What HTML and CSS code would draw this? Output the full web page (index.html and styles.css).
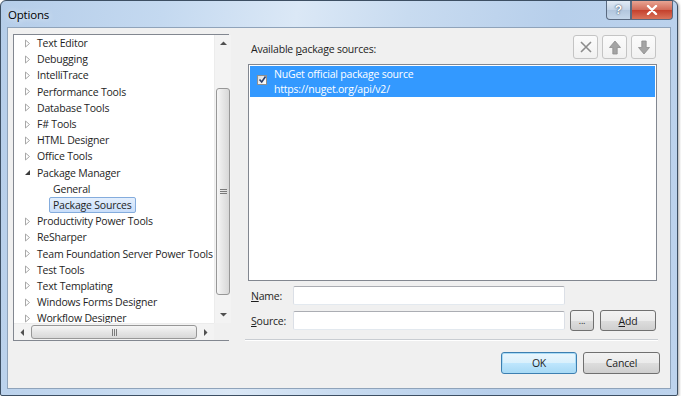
FILE: index.html
```html
<!DOCTYPE html>
<html lang="en">
<head>
    <meta charset="UTF-8">
    <title>Options</title>
    <link rel="stylesheet" href="styles.css">
</head>
<body>
<div class="window">
    <div class="titlebar">
        <span class="title">Options</span>
        <div class="caption-btns">
            <button class="cap-help">?</button>
            <button class="cap-close">
                <svg width="12" height="10" viewBox="0 0 12 10"><path d="M2 1 L10 9 M10 1 L2 9" stroke="#fff" stroke-width="2.4" stroke-linecap="round"/></svg>
            </button>
        </div>
    </div>

    <div class="client">
        <div class="main">
            <div class="tree">
                <div class="tree-items">
                    <div class="node"><span class="arrow"><svg width="9" height="9"><path d="M2.5 1 L6.5 4.5 L2.5 8 Z" fill="none" stroke="#a8a8a8"/></svg></span><span class="label">Text Editor</span></div>
                    <div class="node"><span class="arrow"><svg width="9" height="9"><path d="M2.5 1 L6.5 4.5 L2.5 8 Z" fill="none" stroke="#a8a8a8"/></svg></span><span class="label">Debugging</span></div>
                    <div class="node"><span class="arrow"><svg width="9" height="9"><path d="M2.5 1 L6.5 4.5 L2.5 8 Z" fill="none" stroke="#a8a8a8"/></svg></span><span class="label">IntelliTrace</span></div>
                    <div class="node"><span class="arrow"><svg width="9" height="9"><path d="M2.5 1 L6.5 4.5 L2.5 8 Z" fill="none" stroke="#a8a8a8"/></svg></span><span class="label">Performance Tools</span></div>
                    <div class="node"><span class="arrow"><svg width="9" height="9"><path d="M2.5 1 L6.5 4.5 L2.5 8 Z" fill="none" stroke="#a8a8a8"/></svg></span><span class="label">Database Tools</span></div>
                    <div class="node"><span class="arrow"><svg width="9" height="9"><path d="M2.5 1 L6.5 4.5 L2.5 8 Z" fill="none" stroke="#a8a8a8"/></svg></span><span class="label">F# Tools</span></div>
                    <div class="node"><span class="arrow"><svg width="9" height="9"><path d="M2.5 1 L6.5 4.5 L2.5 8 Z" fill="none" stroke="#a8a8a8"/></svg></span><span class="label">HTML Designer</span></div>
                    <div class="node"><span class="arrow"><svg width="9" height="9"><path d="M2.5 1 L6.5 4.5 L2.5 8 Z" fill="none" stroke="#a8a8a8"/></svg></span><span class="label">Office Tools</span></div>
                    <div class="node"><span class="arrow"><svg width="9" height="9"><path d="M7 2 L7 7 L2 7 Z" fill="#3c3c3c"/></svg></span><span class="label">Package Manager</span></div>
                    <div class="node child"><span class="label">General</span></div>
                    <div class="node child"><span class="label selected">Package Sources</span></div>
                    <div class="node"><span class="arrow"><svg width="9" height="9"><path d="M2.5 1 L6.5 4.5 L2.5 8 Z" fill="none" stroke="#a8a8a8"/></svg></span><span class="label">Productivity Power Tools</span></div>
                    <div class="node"><span class="arrow"><svg width="9" height="9"><path d="M2.5 1 L6.5 4.5 L2.5 8 Z" fill="none" stroke="#a8a8a8"/></svg></span><span class="label">ReSharper</span></div>
                    <div class="node"><span class="arrow"><svg width="9" height="9"><path d="M2.5 1 L6.5 4.5 L2.5 8 Z" fill="none" stroke="#a8a8a8"/></svg></span><span class="label">Team Foundation Server Power Tools</span></div>
                    <div class="node"><span class="arrow"><svg width="9" height="9"><path d="M2.5 1 L6.5 4.5 L2.5 8 Z" fill="none" stroke="#a8a8a8"/></svg></span><span class="label">Test Tools</span></div>
                    <div class="node"><span class="arrow"><svg width="9" height="9"><path d="M2.5 1 L6.5 4.5 L2.5 8 Z" fill="none" stroke="#a8a8a8"/></svg></span><span class="label">Text Templating</span></div>
                    <div class="node"><span class="arrow"><svg width="9" height="9"><path d="M2.5 1 L6.5 4.5 L2.5 8 Z" fill="none" stroke="#a8a8a8"/></svg></span><span class="label">Windows Forms Designer</span></div>
                    <div class="node"><span class="arrow"><svg width="9" height="9"><path d="M2.5 1 L6.5 4.5 L2.5 8 Z" fill="none" stroke="#a8a8a8"/></svg></span><span class="label">Workflow Designer</span></div>
                </div>
                <div class="vscroll">
                    <div class="sb-arrow"><svg width="7" height="5"><path d="M0 4 L3.5 0.5 L7 4 Z" fill="#505050"/></svg></div>
                    <div class="sb-track">
                        <div class="vthumb"><svg width="7" height="7"><path d="M0 1.5 H7 M0 3.5 H7 M0 5.5 H7" stroke="#7a7a7a"/></svg></div>
                    </div>
                    <div class="sb-arrow"><svg width="7" height="5"><path d="M0 1 L3.5 4.5 L7 1 Z" fill="#505050"/></svg></div>
                </div>
                <div class="hscroll">
                    <div class="sb-arrow"><svg width="5" height="7"><path d="M4 0 L0.5 3.5 L4 7 Z" fill="#505050"/></svg></div>
                    <div class="sb-track">
                        <div class="hthumb"><svg width="7" height="7"><path d="M1.5 0 V7 M3.5 0 V7 M5.5 0 V7" stroke="#7a7a7a"/></svg></div>
                    </div>
                    <div class="sb-arrow"><svg width="5" height="7"><path d="M1 0 L4.5 3.5 L1 7 Z" fill="#505050"/></svg></div>
                </div>
                <div class="sb-corner"></div>
            </div>

            <div class="pane">
                <div class="pane-head">
                    <span class="pane-label">Available <u>p</u>ackage sources:</span>
                    <div class="tool-btns">
                        <button class="tool-btn"><svg width="14" height="14"><path d="M2 2 L12 12 M12 2 L2 12" stroke="#8c8c8c" stroke-width="1.6"/></svg></button>
                        <button class="tool-btn"><svg width="12" height="15"><path d="M6 1 L11.5 7.5 L8.2 7.5 L8.2 14 L3.8 14 L3.8 7.5 L0.5 7.5 Z" fill="#a4a4a4" stroke="#8e8e8e" stroke-width="0.8"/></svg></button>
                        <button class="tool-btn"><svg width="12" height="15"><path d="M6 14 L11.5 7.5 L8.2 7.5 L8.2 1 L3.8 1 L3.8 7.5 L0.5 7.5 Z" fill="#a4a4a4" stroke="#8e8e8e" stroke-width="0.8"/></svg></button>
                    </div>
                </div>

                <div class="sources">
                    <div class="source-row">
                        <span class="check"><svg width="9" height="9"><path d="M1.5 4.5 L3.7 7 L7.5 1.5" fill="none" stroke="#2b3f6b" stroke-width="1.6"/></svg></span>
                        <div class="source-text">
                            <div>NuGet official package source</div>
                            <div>https://nuget.org/api/v2/</div>
                        </div>
                    </div>
                </div>

                <div class="field">
                    <label class="field-label"><u>N</u>ame:</label>
                    <input class="field-input" type="text">
                </div>
                <div class="field">
                    <label class="field-label"><u>S</u>ource:</label>
                    <input class="field-input" type="text">
                    <button class="btn btn-browse">...</button>
                    <button class="btn btn-add"><u>A</u>dd</button>
                </div>
                <div class="separator"></div>
            </div>
        </div>

        <div class="actions">
            <button class="btn btn-ok">OK</button>
            <button class="btn btn-cancel">Cancel</button>
        </div>
    </div>
</div>
</body>
</html>
```

FILE: styles.css
```css
body {
    margin: 0;
    padding: 0;
    background-color: #ffffff;
    font-family: "Open Sans", "Noto Sans", sans-serif;
    font-size: 10.5px;
    letter-spacing: -0.2px;
    color: #1e1e1e;
}

.window {
    width: 678px;
    height: 396px;
    box-sizing: border-box;
    border: 1px solid #3d4f63;
    border-radius: 6px 6px 2px 2px;
    padding: 0 6px 6px;
    background: linear-gradient(100deg, #b5cde9 0%, #c4d9f0 22%, #dbe8f6 40%, #c8dbf0 55%, #b7cfeb 75%, #bdd3ed 100%);
    box-shadow: 1px 1px 3px rgba(0, 0, 0, 0.35);
}

.titlebar {
    height: 26px;
    display: flex;
    justify-content: space-between;
    align-items: flex-start;
}

.title {
    padding: 6px 0 0 1px;
    font-size: 11.5px;
    color: #000000;
    text-shadow: 0 0 6px #ffffff;
}

.caption-btns {
    display: flex;
    margin-right: -2px;
}

.caption-btns button {
    height: 19px;
    border: 1px solid #5a6a80;
    border-top: none;
    padding: 0;
    display: flex;
    align-items: center;
    justify-content: center;
}

.cap-help {
    width: 25px;
    border-radius: 0 0 0 4px;
    background: linear-gradient(#e2ebf5, #c3d3e6 50%, #b2c6dd 51%, #c5d7ea);
    color: #ffffff;
    font-weight: bold;
    font-size: 12px;
    text-shadow: 0 0 2px #4b5c73, 0 0 1px #4b5c73;
}

.cap-close {
    width: 42px;
    border-radius: 0 0 4px 0;
    border-left: none;
    background: linear-gradient(#e8a493, #d26a57 50%, #c4402c 51%, #d9745b);
}

.client {
    height: 362px;
    box-sizing: border-box;
    border: 1px solid #8fa3ba;
    background-color: #f0f0f0;
    padding: 6px 0 0 5px;
}

.main {
    display: flex;
    height: 307px;
}

/* tree view */
.tree {
    width: 216px;
    box-sizing: border-box;
    border: 1px solid #828790;
    background-color: #ffffff;
    display: grid;
    grid-template-columns: 1fr 17px;
    grid-template-rows: 1fr 17px;
}

.tree-items {
    overflow: hidden;
    white-space: nowrap;
}

.node {
    height: 16.2px;
    display: flex;
    align-items: center;
    padding-left: 5px;
}

.node.child {
    padding-left: 35px;
}

.arrow {
    width: 14px;
    flex-shrink: 0;
    display: flex;
    align-items: center;
    padding-left: 4px;
    box-sizing: border-box;
}

.label {
    flex-shrink: 0;
    display: inline-block;
    line-height: 14px;
    border: 1px solid transparent;
    border-radius: 2px;
    padding: 0 3px;
}

.label.selected {
    background: linear-gradient(#e4effd, #c9defa);
    border-color: #84acdd;
}

.vscroll,
.hscroll {
    background: #f3f3f3;
    display: flex;
}

.vscroll {
    flex-direction: column;
    border-left: 1px solid #ececec;
}

.hscroll {
    border-top: 1px solid #ececec;
}

.sb-arrow {
    width: 17px;
    height: 17px;
    flex-shrink: 0;
    display: flex;
    align-items: center;
    justify-content: center;
}

.sb-track {
    flex: 1;
    display: flex;
}

.vscroll .sb-track {
    flex-direction: column;
}

.vthumb {
    margin: 36px 1px 0 1px;
    height: 205px;
    border: 1px solid #979797;
    border-radius: 3px;
    background: linear-gradient(90deg, #f6f6f6, #e6e6e6 50%, #d8d8d8);
    display: flex;
    align-items: center;
    justify-content: center;
}

.hthumb {
    margin: 1px 0;
    width: 164px;
    border: 1px solid #979797;
    border-radius: 3px;
    background: linear-gradient(#f6f6f6, #e6e6e6 50%, #d8d8d8);
    display: flex;
    align-items: center;
    justify-content: center;
}

.sb-corner {
    background: #f0f0f0;
}

/* right pane */
.pane {
    width: 413px;
    margin-left: 16px;
    display: flex;
    flex-direction: column;
}

.pane-head {
    display: flex;
    justify-content: space-between;
    align-items: center;
    height: 25px;
    margin-top: 1px;
    padding: 0 2px 0 6px;
}

.pane-label {
    padding-top: 4px;
}

.tool-btns {
    display: flex;
    gap: 4px;
}

.tool-btn {
    width: 25px;
    height: 24px;
    padding: 0;
    border: 1px solid #c4c4c4;
    border-radius: 3px;
    background: linear-gradient(#fbfbfb, #f1f1f1);
    display: flex;
    align-items: center;
    justify-content: center;
}

.sources {
    height: 218px;
    margin: 4px 1px 0 3px;
    box-sizing: border-box;
    border: 1px solid #828790;
    background-color: #ffffff;
    padding: 1px;
}

.source-row {
    height: 31px;
    box-sizing: border-box;
    background-color: #3399ff;
    color: #ffffff;
    display: flex;
    padding: 1px 0 0 7px;
}

.check {
    width: 10px;
    height: 10px;
    margin-top: 8px;
    box-sizing: border-box;
    border: 1px solid #8f8f8f;
    background: linear-gradient(135deg, #dcdcdc, #ffffff);
    display: flex;
    align-items: center;
    justify-content: center;
}

.source-text {
    margin-left: 7px;
    line-height: 15px;
}

.field {
    display: flex;
    align-items: center;
    margin-top: 5px;
    padding-left: 6px;
}

.field:first-of-type {
    margin-top: 4px;
}

.field-label {
    width: 42px;
}

.field-input {
    width: 272px;
    height: 19px;
    box-sizing: border-box;
    margin: 0;
    border: 1px solid #dbdfe6;
    border-top-color: #abadb3;
    border-bottom-color: #e3e9ef;
    border-radius: 2px;
    background: #ffffff;
}

.btn {
    height: 21px;
    padding: 0;
    border: 1px solid #707070;
    border-radius: 3px;
    background: linear-gradient(#f2f2f2, #ebebeb 50%, #dddddd 51%, #cfcfcf);
    font-family: "Open Sans", "Noto Sans", sans-serif;
    font-size: 10.5px;
    letter-spacing: -0.2px;
    color: #1e1e1e;
}

.btn-browse {
    width: 24px;
    margin-left: 5px;
    font-size: 9px;
}

.btn-add {
    width: 56px;
    margin-left: 6px;
}

.separator {
    margin-top: 8px;
    border-top: 1px solid #c9cdd2;
    border-bottom: 1px solid #ffffff;
}

.actions {
    display: flex;
    justify-content: flex-end;
    gap: 6px;
    margin-top: 11px;
    padding-right: 10px;
}

.btn-ok {
    width: 76px;
    height: 22px;
    border-color: #3c7fb1;
    background: linear-gradient(#eaf6fd, #d9f0fc 50%, #bee6fd 51%, #a7d9f5);
    box-shadow: 0 0 0 1px #a9dbf6 inset;
}

.btn-cancel {
    width: 77px;
    height: 22px;
}
```
